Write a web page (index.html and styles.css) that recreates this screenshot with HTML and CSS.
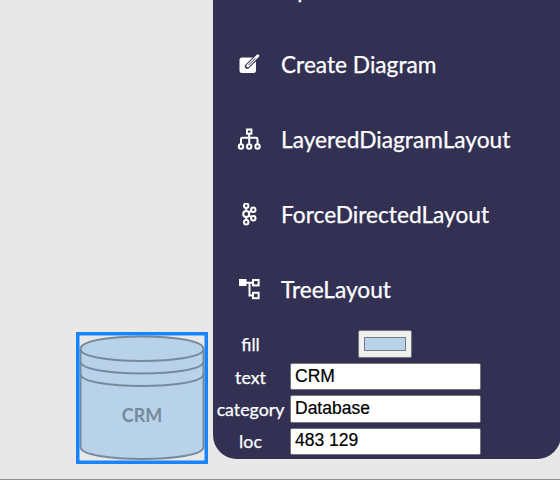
FILE: index.html
```html
<!DOCTYPE html>
<html lang="en">
<head>
<meta charset="utf-8">
<title>Diagram editor</title>
<link rel="stylesheet" href="styles.css">
</head>
<body>
<main class="app">
  <section class="canvas">
    <svg class="node" width="132" height="132" viewBox="0 0 132 132">
      <path class="shape" d="M4.500 17C4.500 .3 127.500 .3 127.500 17V115C127.500 131 4.500 131 4.500 115Z"/>
      <path class="ring" d="M4.500 17C4.500 33 127.500 33 127.500 17M4.500 29.500C4.500 45.500 127.500 45.500 127.500 29.500M4.500 42C4.500 58 127.500 58 127.500 42"/>
      <rect class="selection" x="1.750" y="1.750" width="128.500" height="128.500"/>
      <text class="caption" x="66" y="90">CRM</text>
    </svg>
  </section>
  <aside class="panel">
    <nav class="menu">
      <a class="item"><span class="icon"></span><span class="label">Upload</span></a>
      <a class="item">
        <svg class="icon" viewBox="0 0 24 24"><rect class="solid" x="2.500" y="4.500" width="16.500" height="15.500" rx="2.500"/><path class="pen-edge" d="M10.300 13.300L20 3.800"/><path class="pen" d="M10.800 12.800L20.800 2.800"/><path class="pen-core" d="M11.500 12.100L18.500 5.100"/></svg>
        <span class="label">Create Diagram</span>
      </a>
      <a class="item">
        <svg class="icon" viewBox="0 0 24 24"><g class="line"><rect x="10" y="1.500" width="4.400" height="4.200"/><circle cx="4" cy="18.500" r="2.200"/><circle cx="12.200" cy="18.500" r="2.200"/><circle cx="20.500" cy="18.500" r="2.200"/><path d="M12.200 5.700V16.300M4 16.300V11.200Q4 9.800 5.400 9.800H19.100Q20.500 9.800 20.500 11.200V16.300"/></g></svg>
        <span class="label">LayeredDiagramLayout</span>
      </a>
      <a class="item">
        <svg class="icon" viewBox="0 0 24 24"><g class="line"><circle cx="9.200" cy="2.800" r="2.200"/><circle cx="9.200" cy="11" r="3"/><circle cx="9.200" cy="19.300" r="2.200"/><circle cx="16.300" cy="6.800" r="2.200"/><circle cx="16.300" cy="15.200" r="2.200"/><path d="M9.200 5V8M9.200 14V17.100M11.800 9.500L14.400 8M11.800 12.500L14.400 14"/></g></svg>
        <span class="label">ForceDirectedLayout</span>
      </a>
      <a class="item">
        <svg class="icon" viewBox="0 0 24 24"><rect class="solid" x="2" y="1" width="7.500" height="7"/><g class="tree"><rect x="16" y="2" width="5.600" height="5.400"/><rect x="16" y="14.800" width="5.600" height="5.400"/><path d="M9 4.700H15.500M12.500 5V17.500H15.500"/></g></svg>
        <span class="label">TreeLayout</span>
      </a>
    </nav>
    <form class="inspector">
      <div class="row fill-row"><span class="key">fill</span><span class="value"><button type="button" class="swatch"><span class="color"></span></button></span></div>
      <label class="row"><span class="key">text</span><input class="value field" value="CRM"></label>
      <label class="row"><span class="key">category</span><input class="value field" value="Database"></label>
      <label class="row"><span class="key">loc</span><input class="value field" value="483 129"></label>
    </form>
  </aside>
</main>
</body>
</html>
```
FILE: styles.css
```css
* { box-sizing: border-box; }
body { margin: 0; background: #e8e8e8; font-family: Lato, sans-serif; overflow: hidden; }
.app { display: flex; height: 480px; border-bottom: 1px solid #8e8e8e; }
.canvas { position: relative; width: 213px; flex: none; }
.node { position: absolute; left: 76px; top: 332px; }
.shape { fill: #b7d2e9; stroke: #778a9c; stroke-width: 2; }
.ring { fill: none; stroke: #778a9c; stroke-width: 2; }
.selection { fill: none; stroke: #1b83f8; stroke-width: 3.5; }
.caption { fill: #778a9c; font-size: 18px; font-weight: 700; text-anchor: middle; }
.panel { width: 348px; height: 459px; flex: none; overflow: hidden; background: #333153; border-radius: 0 0 24px 24px; color: #fff; }
.menu { margin-top: -48px; }
.item { display: flex; align-items: center; height: 75px; padding-left: 24px; }
.icon { width: 24px; height: 24px; margin-right: 20px; }
.label { font-size: 22.700px; line-height: 30px; white-space: nowrap; -webkit-text-stroke: .25px #fff; }
.solid { fill: #fff; }
.line { fill: none; stroke: #fff; stroke-width: 2; }
.tree { fill: none; stroke: #fff; stroke-width: 2; }
.pen-edge { stroke: #333153; stroke-width: 5; stroke-linecap: round; }
.pen { stroke: #fff; stroke-width: 3; stroke-linecap: round; }
.pen-core { stroke: #333153; stroke-width: 1; }
.inspector { display: grid; gap: 5px; padding: 2px 0 0 4px; }
.row { display: flex; align-items: center; height: 27.300px; }
.fill-row { height: 29px; }
.key { width: 67px; margin-right: 6px; display: flex; justify-content: center; font-size: 17.800px; line-height: 24px; -webkit-text-stroke: .25px #fff; }
.value { width: 191px; }
.fill-row .value { display: flex; justify-content: center; }
.swatch { width: 54px; height: 28px; margin-right: 2px; padding: 6px 5px; background: #efefef; border: 1px solid #77757c; border-radius: 2px; }
.color { display: block; height: 14px; background: #b7d2e9; border: 1px solid #777e87; }
.field { height: 27.300px; margin: 0; padding: 0 4px 1px; border: 1px solid #77757c; border-radius: 2px; background: #fff; color: #000; font: 17.500px "Liberation Sans", Arial, sans-serif; -webkit-text-stroke: .2px #000; }
```
